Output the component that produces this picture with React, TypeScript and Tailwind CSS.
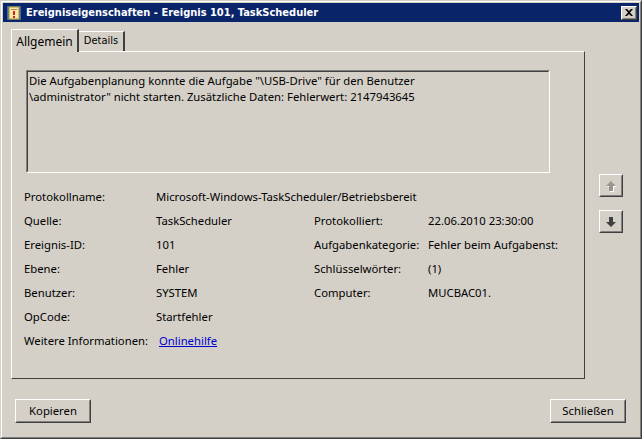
import React from "react";

const ui = { fontFamily: '"Noto Sans", "Open Sans", sans-serif' };
const tahoma = { fontFamily: '"DejaVu Sans Condensed", "DejaVu Sans", sans-serif' };

function Raised({ className = "", children }: { className?: string; children?: React.ReactNode }) {
  return (
    <div className={"border border-t-white border-l-white border-r-[#404040] border-b-[#404040] " + className}>
      <div className="h-full w-full border border-t-[#d4d0c8] border-l-[#d4d0c8] border-r-[#808080] border-b-[#808080] flex items-center justify-center">
        {children}
      </div>
    </div>
  );
}

function Row({ l1, v1, l2, v2 }: { l1: string; v1: React.ReactNode; l2?: string; v2?: string }) {
  return (
    <div className="flex h-[24px] items-center text-[11.3px] text-black">
      <div className="w-[132px] shrink-0">{l1}</div>
      <div className="w-[158px] shrink-0 whitespace-nowrap">{v1}</div>
      <div className="w-[114px] shrink-0 whitespace-nowrap">{l2}</div>
      <div className="whitespace-nowrap">{v2}</div>
    </div>
  );
}

export default function App() {
  return (
    <div className="w-[642px] h-[439px] bg-[#d4d0c8] border border-t-[#d4d0c8] border-l-[#d4d0c8] border-r-[#404040] border-b-[#404040] overflow-hidden" style={ui}>
      <div className="h-full w-full border border-t-white border-l-white border-r-[#808080] border-b-[#808080] p-[1px] flex flex-col">
        {/* Title bar */}
        <div className="h-[19px] bg-[#0a246a] flex items-center pl-[3px] pr-[2px] shrink-0">
          <svg width="16" height="16" viewBox="0 0 16 16" className="shrink-0">
            <rect x="1" y="1" width="14" height="14" fill="#3a6ea5" />
            <rect x="3" y="2" width="10" height="12" fill="#f4e9a8" stroke="#b09030" strokeWidth="1" />
            <rect x="5" y="4" width="6" height="1" fill="#c08040" />
            <rect x="7" y="6" width="2" height="4" fill="#d02020" />
            <rect x="7" y="11" width="2" height="2" fill="#d02020" />
          </svg>
          <div className="ml-[4px] text-white font-bold text-[11px] leading-none whitespace-nowrap" style={tahoma}>
            Ereigniseigenschaften - Ereignis 101, TaskScheduler
          </div>
          <div className="flex-1" />
          <Raised className="w-[16px] h-[14px] bg-[#d4d0c8]">
            <svg width="8" height="7" viewBox="0 0 8 7">
              <path d="M0 0h2l2 2 2-2h2L5 3.5 8 7H6L4 5 2 7H0l3-3.5z" fill="#000" />
            </svg>
          </Raised>
        </div>

        {/* Body */}
        <div className="flex-1 flex flex-col pl-[8px] pr-[10px] pt-[6px]">
          <div className="flex">
            <div className="flex flex-col">
              {/* Tabs */}
              <div className="flex items-end h-[23px] relative z-10">
                <div className="h-[23px] w-[68px] -mb-[1px] border-l border-t border-l-white border-t-white border-r-2 border-r-[#404040] bg-[#d4d0c8] flex items-center justify-center pt-[1px] text-[12px] text-black">
                  Allgemein
                </div>
                <div className="h-[20px] w-[46px] border-t border-t-white border-r-2 border-r-[#404040] bg-[#d4d0c8] flex items-center justify-center text-[11px] text-black" style={tahoma}>
                  Details
                </div>
              </div>
              {/* Panel */}
              <div className="w-[574px] h-[328px] border border-t-white border-l-white border-r-[#404040] border-b-[#404040] flex flex-col pl-[14px] pt-[18px]">
                <div className="w-[524px] h-[103px] border border-t-[#808080] border-l-[#808080] border-r-white border-b-white">
                  <div className="h-full w-full border border-t-[#404040] border-l-[#404040] border-r-[#d4d0c8] border-b-[#d4d0c8] px-[1px] pt-[1px] text-[11.3px] leading-[16px] text-black">
                    Die Aufgabenplanung konnte die Aufgabe "\USB-Drive" für den Benutzer<br />
                    \administrator" nicht starten. Zusätzliche Daten: Fehlerwert: 2147943645
                  </div>
                </div>
                <div className="mt-[12px] -ml-[2px] flex flex-col">
                  <Row l1="Protokollname:" v1="Microsoft-Windows-TaskScheduler/Betriebsbereit" />
                  <Row l1="Quelle:" v1="TaskScheduler" l2="Protokolliert:" v2="22.06.2010 23:30:00" />
                  <Row l1="Ereignis-ID:" v1="101" l2="Aufgabenkategorie:" v2="Fehler beim Aufgabenst:" />
                  <Row l1="Ebene:" v1="Fehler" l2="Schlüsselwörter:" v2="(1)" />
                  <Row l1="Benutzer:" v1="SYSTEM" l2="Computer:" v2="MUCBAC01." />
                  <Row l1="OpCode:" v1="Startfehler" />
                  <Row
                    l1="Weitere Informationen:"
                    v1={<span className="ml-[3px] text-[#0000cc] underline">Onlinehilfe</span>}
                  />
                </div>
              </div>
            </div>
            {/* Arrow buttons */}
            <div className="flex flex-col ml-[14px] pt-[146px] gap-[13px]">
              <Raised className="w-[24px] h-[23px] bg-[#d4d0c8]">
                <svg width="12" height="12" viewBox="0 0 12 12">
                  <path d="M6 1l5 5H8v5H4V6H1z" fill="#ffffff" transform="translate(1 1)" />
                  <path d="M6 1l5 5H8v5H4V6H1z" fill="#9a968e" />
                </svg>
              </Raised>
              <Raised className="w-[24px] h-[23px] bg-[#d4d0c8]">
                <svg width="12" height="12" viewBox="0 0 12 12">
                  <path d="M4 1h4v5h3l-5 5-5-5h3z" fill="#404040" />
                </svg>
              </Raised>
            </div>
          </div>
          {/* Bottom buttons */}
          <div className="flex justify-between mt-[20px] pl-[4px] pr-[3px]">
            <Raised className="w-[76px] h-[24px] bg-[#d4d0c8]">
              <span className="text-[11.3px] text-black">Kopieren</span>
            </Raised>
            <Raised className="w-[76px] h-[24px] bg-[#d4d0c8]">
              <span className="text-[11.3px] text-black">Schließen</span>
            </Raised>
          </div>
        </div>
      </div>
    </div>
  );
}
